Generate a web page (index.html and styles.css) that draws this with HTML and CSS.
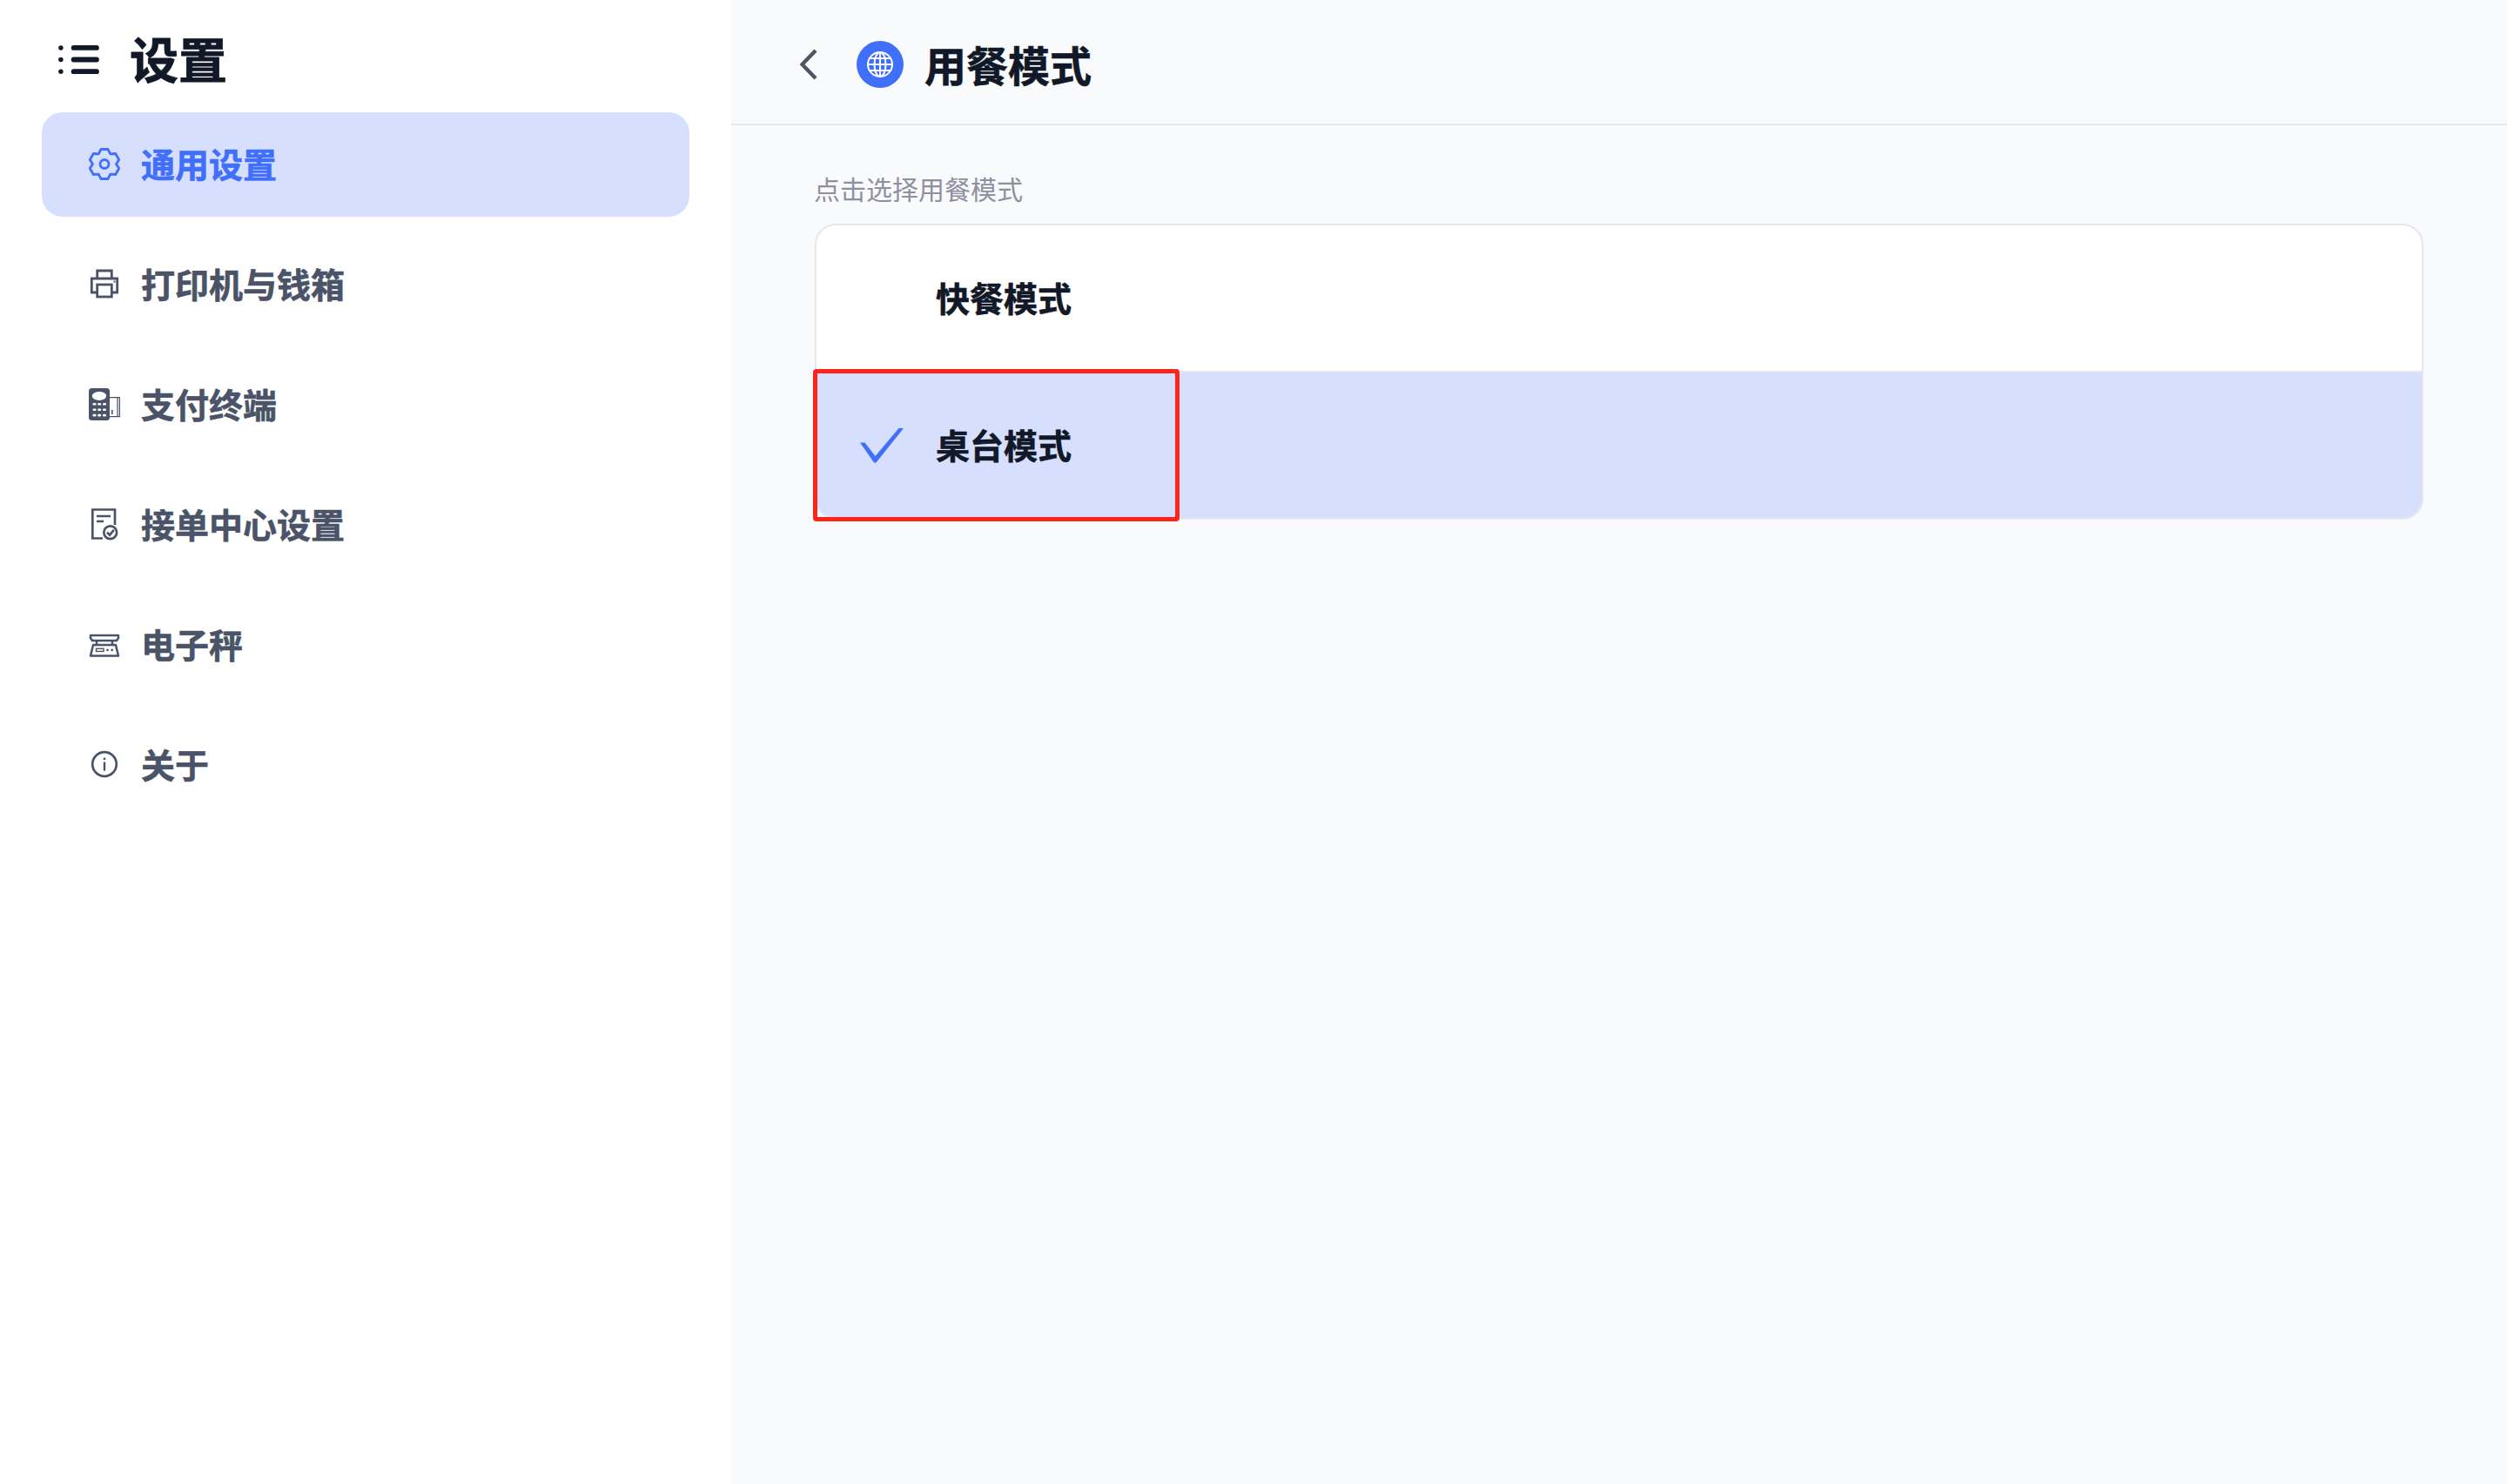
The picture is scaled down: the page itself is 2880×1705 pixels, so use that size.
FILE: index.html
```html
<!DOCTYPE html>
<html lang="zh-CN">
<head>
<meta charset="utf-8">
<title>设置</title>
<link rel="stylesheet" href="styles.css">
</head>
<body>
<div class="app">
  <aside class="sidebar">
    <div class="side-head">
      <svg class="menu-icon" viewBox="0 0 48 36" aria-hidden="true">
        <circle cx="2.8" cy="3" r="2.8"/><circle cx="2.8" cy="17" r="2.8"/><circle cx="2.8" cy="31" r="2.8"/>
        <rect x="15" y="0" width="33" height="6" rx="3"/><rect x="15" y="14" width="33" height="6" rx="3"/><rect x="15" y="28" width="33" height="6" rx="3"/>
      </svg>
      <h1 class="side-title">设置</h1>
    </div>
    <nav class="nav">
      <a class="nav-item active">
        <svg class="nav-icon" viewBox="0 0 40 40" aria-hidden="true"><g fill="none" stroke="currentColor" stroke-width="2.8" stroke-linejoin="round">
          <path d="M16 2.5h8l2.75 5.3 5.95-.3 4 7-3.2 5 3.2 5-4 7-5.95-.3L24 36.500h-8l-2.750-5.300-5.950.3-4-7 3.200-5-3.200-5 4-7 5.950.3z"/>
          <circle cx="20" cy="19.5" r="5"/></g></svg>
        <span class="nav-label">通用设置</span>
      </a>
      <a class="nav-item">
        <svg class="nav-icon" viewBox="0 0 40 40" aria-hidden="true"><g fill="none" stroke="currentColor" stroke-width="2.8">
          <path d="M11.7 13V4h16.6v9"/><path d="M11.7 29H5.3V13h29.4v16h-6.4"/><rect x="11.7" y="20" width="16.6" height="14"/></g>
          <rect x="30.5" y="15.5" width="2" height="2" fill="currentColor"/></svg>
        <span class="nav-label">打印机与钱箱</span>
      </a>
      <a class="nav-item">
        <svg class="nav-icon" viewBox="0 0 40 40" aria-hidden="true">
          <rect x="2" y="1" width="24" height="37" rx="3.5" fill="currentColor"/>
          <ellipse cx="14" cy="10" rx="8.2" ry="5" fill="#fff"/>
          <g fill="#fff"><rect x="6.5" y="18" width="4" height="2.6" rx="1.2"/><rect x="12.2" y="18" width="4" height="2.6" rx="1.2"/><rect x="18" y="18" width="4" height="2.6" rx="1.2"/>
          <rect x="6.5" y="24.4" width="4" height="2.6" rx="1.2"/><rect x="12.2" y="24.4" width="4" height="2.6" rx="1.2"/><rect x="18" y="24.4" width="4" height="2.6" rx="1.2"/>
          <rect x="6.5" y="30.8" width="4" height="2.6" rx="1.2"/><rect x="12.2" y="30.8" width="4" height="2.6" rx="1.2"/><rect x="18" y="30.8" width="4" height="2.6" rx="1.2"/></g>
          <path d="M26 11.6h11.4v22H26M35 11.6v22" fill="none" stroke="currentColor" stroke-width="1.2"/>
          <rect x="28" y="26" width="1.6" height="5" fill="currentColor"/></svg>
        <span class="nav-label">支付终端</span>
      </a>
      <a class="nav-item">
        <svg class="nav-icon" viewBox="0 0 40 40" aria-hidden="true"><g fill="none" stroke="currentColor" stroke-width="2.7">
          <path d="M32 20V2.500H6.300v33H18"/><path d="M11 10h16M11 16h8"/><circle cx="26.700" cy="28.700" r="7.400"/><path d="M23 28.800l3 3 4.800-6"/></g></svg>
        <span class="nav-label">接单中心设置</span>
      </a>
      <a class="nav-item">
        <svg class="nav-icon" viewBox="0 0 40 40" aria-hidden="true"><g fill="none" stroke="currentColor" stroke-width="2.5" stroke-linejoin="round">
          <path d="M4 9h32v3l-2 3H6l-2-3z"/><path d="M11 15v5M29 15v5"/><path d="M7 20h26l3 12.500H4z"/></g>
          <rect x="10.500" y="24.200" width="8.500" height="3.200" fill="none" stroke="currentColor" stroke-width="1.400"/>
          <circle cx="23.500" cy="25.800" r="1.400" fill="currentColor"/><circle cx="28.700" cy="25.800" r="1.400" fill="currentColor"/></svg>
        <span class="nav-label">电子秤</span>
      </a>
      <a class="nav-item">
        <svg class="nav-icon" viewBox="0 0 40 40" aria-hidden="true">
          <circle cx="20" cy="19" r="13.800" fill="none" stroke="currentColor" stroke-width="2.700"/>
          <rect x="18.800" y="16.500" width="2.400" height="10" fill="currentColor"/><rect x="18.800" y="11.600" width="2.400" height="2.400" fill="currentColor"/></svg>
        <span class="nav-label">关于</span>
      </a>
    </nav>
  </aside>
  <main class="main">
    <header class="main-head">
      <svg class="back-icon" viewBox="0 0 20 36" aria-hidden="true"><path d="M18 2 2.500 18 18 34" fill="none" stroke="currentColor" stroke-width="4.400"/></svg>
      <span class="globe">
        <svg class="globe-icon" viewBox="0 0 32 32" aria-hidden="true"><g fill="none" stroke="#fff" stroke-width="2">
          <circle cx="16" cy="16" r="14"/><ellipse cx="16" cy="16" rx="6.500" ry="14"/><path d="M16 2v28M2 16h28M4.200 9h23.600M4.200 23h23.600"/></g></svg>
      </span>
      <h2 class="main-title">用餐模式</h2>
    </header>
    <section class="content">
      <p class="hint">点击选择用餐模式</p>
      <div class="card">
        <div class="row">
          <span class="check-slot"></span>
          <span class="row-label">快餐模式</span>
        </div>
        <div class="row selected">
          <span class="check-slot">
            <svg class="check" viewBox="0 0 50 40" aria-hidden="true"><path d="M0 16.500h5.500L17.500 32 44.500 0H50L18.500 39.500H16z" fill="currentColor"/></svg>
          </span>
          <span class="row-label">桌台模式</span>
          <span class="highlight"></span>
        </div>
      </div>
    </section>
  </main>
</div>
</body>
</html>
```
FILE: styles.css
```css
* { box-sizing: border-box; }
html, body { margin: 0; padding: 0; }
body {
  font-family: "Noto Sans CJK SC", "Noto Sans", sans-serif;
  color: #111827;
  background: #f9fafb;
}
.app { display: flex; width: 2880px; height: 1705px; overflow: hidden; }
.sidebar {
  width: 840px;
  flex: none;
  background: #fff;
  padding: 0 48px;
}
.side-head {
  height: 129px;
  display: flex;
  align-items: center;
  padding: 9px 0 0 19px;
  gap: 35px;
}
.menu-icon { width: 47px; height: 35px; fill: #111827; flex: none; }
.side-title {
  margin: 0 0 6px;
  font-size: 56px;
  line-height: 1;
  font-weight: 700;
  color: #111827;
  -webkit-text-stroke: 0.8px currentColor;
}
.nav { display: flex; flex-direction: column; gap: 18px; }
.nav-item {
  height: 120px;
  display: flex;
  align-items: center;
  gap: 22px;
  padding-left: 52px;
  border-radius: 24px;
  font-size: 39px;
  font-weight: 700;
  color: #4a5367;
}
.nav-label { margin-bottom: 4px; -webkit-text-stroke: 0.6px currentColor; }
.nav-item.active { background: #d6e0fe; color: #3f6ffb; }
.nav-icon { width: 40px; height: 40px; flex: none; }
.main { flex: 1; min-width: 0; display: flex; flex-direction: column; }
.main-head {
  height: 144px;
  flex: none;
  display: flex;
  align-items: center;
  padding: 6px 0 0 79px;
  border-bottom: 2px solid #e5e7eb;
}
.back-icon { width: 20px; height: 36px; color: #4b5563; flex: none; }
.globe {
  width: 54px;
  height: 54px;
  margin-left: 45px;
  border-radius: 50%;
  background: #3f6ffb;
  display: flex;
  align-items: center;
  justify-content: center;
  flex: none;
}
.globe-icon { width: 32px; height: 32px; }
.main-title {
  margin: 0 0 3px 24px;
  font-size: 48px;
  line-height: 1;
  font-weight: 700;
  color: #111827;
  -webkit-text-stroke: 0.6px currentColor;
}
.content { padding: 0 96px; }
.hint { margin: 50px 0 0 -1px; height: 44px; font-size: 30px; line-height: 44px; color: #8f8f9f; }
.card {
  margin-top: 19px;
  border: 2px solid #e5e7eb;
  border-radius: 24px;
  background: #fff;
}
.row { position: relative; height: 167px; display: flex; align-items: center; padding-left: 50px; }
.row.selected {
  height: 169px;
  border-top: 2px solid #e5e7eb;
  background: #d6e0fe;
  border-radius: 0 0 22px 22px;
}
.check-slot { width: 50px; height: 40px; flex: none; display: flex; margin-right: 37px; }
.check { width: 50px; height: 40px; color: #3f6ffb; }
.row-label { font-size: 39px; font-weight: 700; color: #111827; margin-bottom: 4px; -webkit-text-stroke: 0.6px currentColor; }
.highlight {
  position: absolute;
  left: -4px;
  top: -4px;
  width: 421px;
  height: 175px;
  border: 5px solid #ff2318;
  border-radius: 4px;
}
```
